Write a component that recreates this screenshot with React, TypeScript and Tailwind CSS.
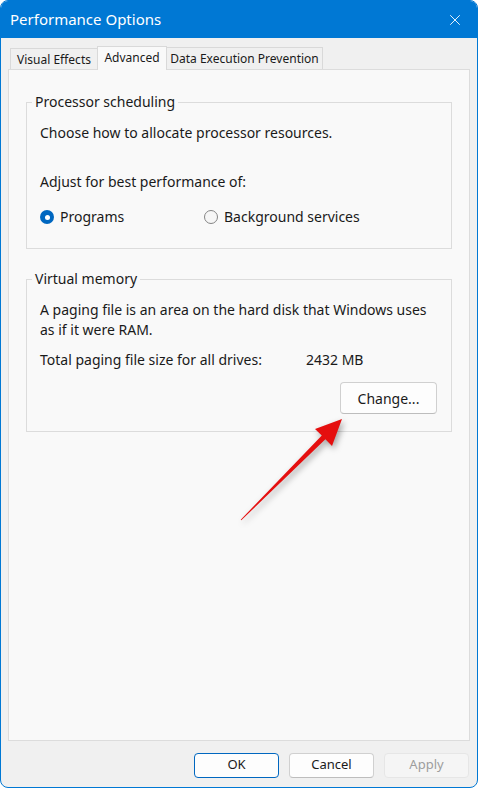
import { X } from "lucide-react";

const font = "font-['Noto_Sans',sans-serif]";

function Radio({ checked, label }: { checked?: boolean; label: string }) {
  return (
    <label className="flex items-center gap-[6px]">
      {checked ? (
        <span className="flex h-[14px] w-[14px] items-center justify-center rounded-full bg-[#0067c0]">
          <span className="h-[5px] w-[5px] rounded-full bg-white" />
        </span>
      ) : (
        <span className="h-[14px] w-[14px] rounded-full border border-[#858585] bg-[#f6f6f6]" />
      )}
      <span>{label}</span>
    </label>
  );
}

function GroupBox({ title, children }: { title: string; children: React.ReactNode }) {
  return (
    <fieldset className="mx-[17px] border border-[#dcdcdc]">
      <legend className="ml-[5px] px-[3px] leading-[20px]">{title}</legend>
      <div className="px-[13px]">{children}</div>
    </fieldset>
  );
}

function Btn({ children, kind }: { children: React.ReactNode; kind?: "default" | "disabled" }) {
  const base = "flex h-[25px] w-[85px] items-center justify-center rounded-[4px] border text-[13px]";
  if (kind === "default")
    return <button className={`${base} border-[#0067c0] bg-[#fdfdfd] text-[#1a1a1a]`}>{children}</button>;
  if (kind === "disabled")
    return <button className={`${base} border-[#e6e6e6] bg-[#f5f5f5] text-[#9d9d9d]`}>{children}</button>;
  return <button className={`${base} border-[#d0d0d0] border-b-[#bdbdbd] bg-[#fdfdfd] text-[#1a1a1a]`}>{children}</button>;
}

export default function App() {
  return (
    <div className={`relative h-[788px] w-[478px] bg-white ${font}`}>
      <div className="flex h-full w-full flex-col overflow-hidden rounded-[8px] border border-[#0078d4] bg-[#f0f0f0] text-[14px] text-[#1a1a1a]">
        {/* title bar */}
        <div className="flex h-[37px] shrink-0 items-center justify-between bg-[#0078d4] pl-[9px] pr-[13px] text-white">
          <span className="text-[15px]">Performance Options</span>
          <X className="h-[18px] w-[18px]" strokeWidth={1.2} />
        </div>

        {/* tabs */}
        <div className="mt-[8px] flex h-[23px] shrink-0 items-end pl-[9px] text-[12px]">
          <div className="flex h-[21px] w-[88px] items-center justify-center border border-b-0 border-[#d9d9d9] bg-[#f0f0f0] pt-[1px]">Visual Effects</div>
          <div className="relative z-10 -mb-px -ml-px flex h-[24px] w-[70px] items-center justify-center border border-b-0 border-[#d9d9d9] bg-[#f9f9f9] pb-[1px]">Advanced</div>
          <div className="-ml-px flex h-[22px] w-[157px] items-center justify-center border border-b-0 border-[#d9d9d9] bg-[#f0f0f0] pt-[1px]">Data Execution Prevention</div>
        </div>

        {/* panel */}
        <div className="mx-[7px] flex flex-1 flex-col border border-[#dcdcdc] bg-[#f9f9f9] pt-[22px]">
          <GroupBox title="Processor scheduling">
            <p className="mt-[11px] leading-[20px]">Choose how to allocate processor resources.</p>
            <p className="mt-[29px] leading-[20px]">Adjust for best performance of:</p>
            <div className="mt-[15px] mb-[21px] flex leading-[20px]">
              <div className="w-[164px]">
                <Radio checked label="Programs" />
              </div>
              <Radio label="Background services" />
            </div>
          </GroupBox>

          <div className="h-[20px]" />

          <GroupBox title="Virtual memory">
            <p className="mt-[11px] leading-[20px]">A paging file is an area on the hard disk that Windows uses as if it were RAM.</p>
            <div className="mt-[10px] flex leading-[20px]">
              <span className="w-[266px]">Total paging file size for all drives:</span>
              <span>2432 MB</span>
            </div>
            <div className="mt-[12px] mb-[17px] flex justify-end pr-[1px]">
              <button className="flex h-[32px] w-[97px] items-center justify-center rounded-[4px] border border-[#d0d0d0] border-b-[#bdbdbd] bg-[#fdfdfd]">
                Change...
              </button>
            </div>
          </GroupBox>
        </div>

        {/* footer */}
        <div className="flex h-[46px] shrink-0 items-center justify-end gap-[10px] pr-[8px] pt-[2px]">
          <Btn kind="default">OK</Btn>
          <Btn>Cancel</Btn>
          <Btn kind="disabled">Apply</Btn>
        </div>
      </div>

      {/* red annotation arrow */}
      <svg
        className="pointer-events-none absolute inset-0 drop-shadow-[2px_3px_3px_rgba(0,0,0,0.35)]"
        width="478"
        height="788"
        viewBox="0 0 478 788"
      >
        <polygon
          points="241.3,520.3 325.4,439.2 332,446 342,419 315,429 321.8,435.6 240.7,519.7"
          fill="#e50f0f"
        />
      </svg>
    </div>
  );
}
